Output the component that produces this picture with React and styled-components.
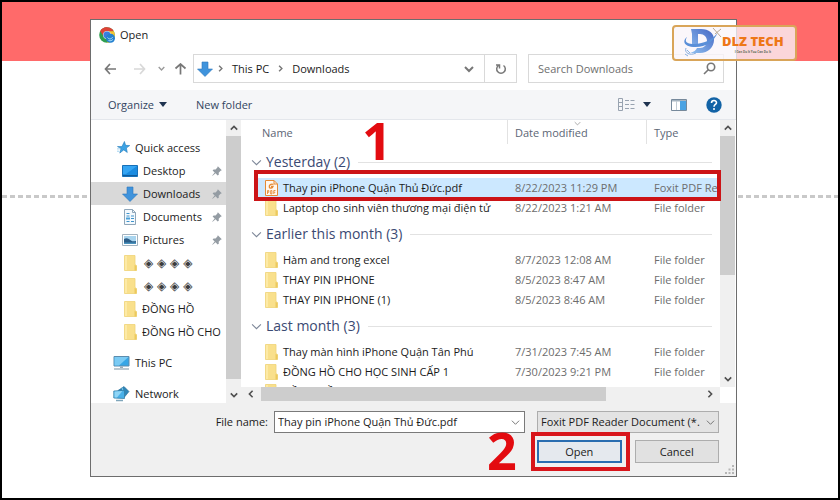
import React from "react";
import styled, { createGlobalStyle } from "styled-components";

const GlobalStyle = createGlobalStyle`
    * {
        box-sizing: border-box;
    }
    body {
        margin: 0;
        background: #ffffff;
        font-family: "Open Sans", "Noto Sans", sans-serif;
        font-size: 11px;
        line-height: 20px;
        color: #1b1b1b;
    }
    button, input, select {
        font: inherit;
        color: inherit;
        margin: 0;
    }
    svg {
        display: block;
        flex: none;
    }
`;

const Page = styled.div`
    position: relative;
    min-height: 100vh;
    padding: 17px 101px 20px 88px;
    border: 2px solid #000000;
    background: linear-gradient(#ff6a6a, #ff6a6a) top / 100% 59px no-repeat;
`;
const DashedLine = styled.div`
    position: absolute;
    left: 0;
    right: 0;
    top: 193px;
    height: 3px;
    background: repeating-linear-gradient(90deg, #c9c9c9 0 5px, #ffffff 5px 8px);
`;
const Dialog = styled.main`
    position: relative;
    border: 1px solid #6d6d6d;
    background: #ffffff;
`;

const TitleBar = styled.header`
    display: flex;
    align-items: center;
    gap: 5px;
    height: 30px;
    padding-left: 8px;
`;
const Title = styled.h1`
    margin: 0;
    font-size: 11px;
    font-weight: 400;
`;

const AddressRow = styled.div`
    display: flex;
    align-items: center;
    padding: 4px 12px 7px 5px;
`;
const NavButton = styled.button`
    display: flex;
    align-items: center;
    justify-content: center;
    width: ${(props) => props.$width}px;
    height: 28px;
    padding: 0;
    border: 0;
    background: transparent;
    color: ${(props) => props.$color || "#777777"};
`;
const AddressBox = styled.div`
    display: flex;
    flex: 1;
    align-items: center;
    height: 29px;
    margin-right: 11px;
    padding-left: 3px;
    border: 1px solid #d9d9d9;
    color: #777777;
`;
const AddressIcon = styled.span`
    margin-right: 4px;
`;
const Crumb = styled.a`
    margin: 0 8px;
    color: #1b1b1b;
    text-decoration: none;
`;
const Spacer = styled.div`
    flex: 1;
`;
const RefreshButton = styled(NavButton)`
    border-left: 1px solid #d9d9d9;
`;
const SearchBox = styled.div`
    display: flex;
    align-items: center;
    width: 196px;
    height: 29px;
    padding: 0 7px 0 9px;
    border: 1px solid #d9d9d9;
`;
const SearchInput = styled.input`
    flex: 1;
    min-width: 0;
    padding: 0;
    border: 0;
    outline: 0;
    background: transparent;
    &::placeholder {
        color: #6f6f6f;
        opacity: 1;
    }
`;

const Toolbar = styled.div`
    display: flex;
    align-items: center;
    height: 30px;
    padding: 0 14px 0 17px;
    border-bottom: 1px solid #e4e7ec;
    background: #f5f6f8;
`;
const ToolButton = styled.button`
    display: flex;
    align-items: center;
    gap: ${(props) => props.$gap || 5}px;
    margin-right: ${(props) => props.$space || 0}px;
    padding: 0;
    border: 0;
    background: transparent;
    color: #33455f;
`;

const Body = styled.div`
    display: flex;
    height: 283px;
`;
const Sidebar = styled.nav`
    width: 135px;
    padding-top: 16px;
    overflow: hidden;
`;
const Place = styled.a`
    display: flex;
    align-items: center;
    gap: 4px;
    height: 23px;
    margin-top: ${(props) => (props.$spaced ? 8 : 0)}px;
    padding: 0 4px 0 ${(props) => props.$indent}px;
    background: ${(props) => (props.$active ? "#d9d9d9" : "transparent")};
    color: #1b1b1b;
    text-decoration: none;
    white-space: nowrap;
`;
const PlaceName = styled.span`
    flex: 1;
    padding-left: 1px;
`;
const Glyphs = styled(PlaceName)`
    padding-left: 3px;
    color: #3c3c3c;
    font-family: "DejaVu Sans", sans-serif;
    font-size: 12px;
`;

const VScroll = styled.div`
    display: flex;
    flex-direction: column;
    width: 15px;
    margin-bottom: ${(props) => props.$corner || 0}px;
    background: #f0f0f0;
`;
const HScroll = styled.div`
    display: flex;
    height: 16px;
    border-bottom: 2px solid #f0f0f0;
    background: #f0f0f0;
`;
const ScrollArrow = styled.button`
    display: flex;
    flex: none;
    align-items: center;
    justify-content: center;
    width: 15px;
    height: 16px;
    padding: 0;
    border: 0;
    background: transparent;
    color: #505050;
`;
const SideArrow = styled(ScrollArrow)`
    width: 20px;
    height: 14px;
`;
const Thumb = styled.div`
    flex: ${(props) => props.$grow};
    background: #cdcdcd;
`;
const Track = styled.div`
    flex: ${(props) => props.$grow};
`;

const FilePane = styled.section`
    position: relative;
    display: flex;
    flex: 1;
    min-width: 0;
    padding-right: 1px;
`;
const ListColumn = styled.div`
    display: flex;
    flex: 1;
    flex-direction: column;
    min-width: 0;
`;
const ListView = styled.div`
    flex: 1;
    min-height: 0;
    overflow: hidden;
`;
const FileTable = styled.table`
    width: 100%;
    border-collapse: collapse;
    border-spacing: 0;
    table-layout: fixed;
`;
const HeadCell = styled.th`
    position: relative;
    width: ${(props) => props.$width || "auto"};
    height: 26px;
    padding: 0 0 1px ${(props) => props.$pad}px;
    background: ${(props) => (props.$line ? "linear-gradient(#e2e2e2, #e2e2e2) left top / 1px 24px no-repeat" : "none")};
    color: #5c6675;
    font-weight: 400;
    text-align: left;
`;
const SortMark = styled.span`
    position: absolute;
    top: 0;
    left: 67px;
    color: #8a8a8a;
`;
const GroupCell = styled.th`
    height: 32px;
    padding: 0 8px 0 10px;
    font-weight: 400;
    text-align: left;
`;
const GroupTitle = styled.div`
    display: flex;
    align-items: center;
    gap: 4px;
    color: #3b4a73;
    font-size: 14px;
    > svg {
        color: #7d8798;
    }
    &::after {
        content: "";
        flex: 1;
        height: 1px;
        margin-left: 4px;
        background: #e2e2e2;
    }
`;
const Cell = styled.td`
    height: 20px;
    padding: 0 0 0 8px;
    overflow: hidden;
    background: ${(props) => (props.$selected ? "#cce8ff" : "transparent")};
    color: #6d6d6d;
    white-space: nowrap;
`;
const NameCell = styled(Cell)`
    padding-left: 16px;
    background: ${(props) => (props.$selected ? "linear-gradient(#cce8ff, #cce8ff) 16px 0 no-repeat" : "transparent")};
    color: #1b1b1b;
`;
const FileName = styled.div`
    display: flex;
    align-items: center;
    gap: 5px;
    padding-left: 8px;
`;

const Footer = styled.footer`
    display: grid;
    grid-template-columns: 177px 1fr 182px;
    row-gap: 7px;
    padding: 8px 17px 13px 0;
    background: #f0f0f0;
`;
const FieldLabel = styled.label`
    line-height: 22px;
    text-align: right;
`;
const FileField = styled.div`
    display: flex;
    align-items: center;
    height: 22px;
    margin: 0 12px 0 6px;
    padding: 0 4px 0 3px;
    border: 1px solid #7a7a7a;
    background: #ffffff;
    color: #6b6b6b;
`;
const FileInput = styled.input`
    flex: 1;
    min-width: 0;
    padding: 0;
    border: 0;
    outline: 0;
    background: transparent;
    color: #1b1b1b;
`;
const TypeField = styled.div`
    display: grid;
    align-items: center;
    height: 22px;
    color: #6b6b6b;
    > * {
        grid-area: 1 / 1;
    }
    > svg {
        justify-self: end;
        margin-right: 4px;
        pointer-events: none;
    }
`;
const TypeSelect = styled.select`
    width: 100%;
    height: 22px;
    padding: 0 14px 0 3px;
    border: 1px solid #adadad;
    border-radius: 0;
    outline: 0;
    appearance: none;
    background: #e3e3e3;
    color: #1b1b1b;
`;
const Actions = styled.div`
    display: flex;
    grid-column: 3;
    gap: 13px;
`;
const ActionSlot = styled.div`
    position: relative;
    flex: 1;
`;
const ActionButton = styled.button`
    width: 100%;
    height: 23px;
    padding: 0;
    border: ${(props) => (props.$primary ? "2px solid #2a6db0" : "1px solid #adadad")};
    background: ${(props) => (props.$primary ? "#e5e9ee" : "#e1e1e1")};
    line-height: 18px;
`;
const Grip = styled.svg`
    position: absolute;
    right: 2px;
    bottom: 2px;
`;

/* red call-outs on top of the dialog */
const FileMark = styled.div`
    position: absolute;
    top: 50px;
    left: 13px;
    right: 15px;
    height: 31px;
    border: 4px solid #cc1417;
`;
const OpenMark = styled.div`
    position: absolute;
    inset: -8px -8px -8px -6px;
    border: 4px solid #d8151b;
    pointer-events: none;
`;
const StepNumber = styled.span`
    position: absolute;
    top: ${(props) => props.$top}px;
    left: ${(props) => props.$left}px;
    color: #e30b10;
    font-size: 52px;
    font-weight: 700;
    line-height: 50px;
`;

const Brand = styled.div`
    position: absolute;
    top: 23px;
    right: 41px;
    display: flex;
    align-items: center;
    width: 125px;
    height: 36px;
    padding-left: 9px;
    border: 2px solid #d9a559;
    border-radius: 4px;
    background: rgb(250 245 250 / 78%);
`;
const BrandText = styled.div`
    display: flex;
    flex-direction: column;
    align-items: center;
    color: #ee7718;
    font-size: 13px;
    font-weight: 800;
    line-height: 18px;
    white-space: nowrap;
`;
const BrandTagline = styled.small`
    color: #5c6a55;
    font-size: 3px;
    font-weight: 700;
    line-height: 4px;
`;

const Chevron = ({ dir = "down", size = 8, weight = 2 }) => {
    const paths = {
        down: "M1 3l4 4 4-4",
        up: "M1 7l4-4 4 4",
        left: "M7 1L3 5l4 4",
        right: "M3 1l4 4-4 4",
    };
    return (
        <svg width={size} height={size} viewBox="0 0 10 10" fill="none" stroke="currentColor" strokeWidth={weight}>
            <path d={paths[dir]} />
        </svg>
    );
};

const Caret = () => (
    <svg width="8" height="5" viewBox="0 0 8 5">
        <path d="M0 0h8L4 5z" fill="#1f3350" />
    </svg>
);

const Arrow = ({ turn = 0 }) => (
    <svg width="13" height="12" viewBox="0 0 13 12" fill="none" stroke="currentColor" strokeWidth="1.700">
        <path d="M12 6H2M6 1L1.500 6L6 11" transform={`rotate(${turn} 6.500 6)`} />
    </svg>
);

const ChromeIcon = () => (
    <svg width="16" height="16" viewBox="0 0 16 16">
        <circle cx="8" cy="8" r="7.800" fill="#2f9e4f" />
        <path d="M1.200 4.200A7.800 7.800 0 0 1 14.800 4.200L8 5z" fill="#dd4337" />
        <path d="M1.200 4.200A7.800 7.800 0 0 1 8 .2L8 5 4.800 9.500z" fill="#dd4337" />
        <path d="M8 4.200h6.800A7.800 7.800 0 0 1 8 15.800L11.500 9z" fill="#f6c431" />
        <circle cx="8" cy="8" r="3.900" fill="#cfe3f7" />
        <circle cx="8" cy="8" r="3.400" fill="#3b7de0" />
        <circle cx="11.500" cy="11.300" r="4.500" fill="#2480d0" />
        <path d="M8.500 10.500c1.500 2 4 1.800 5.200-.5M9.500 13.500c2 .8 3.500 0 4.500-1.200" fill="none" stroke="#a9dcf5" strokeWidth="1" />
    </svg>
);

const DownIcon = () => (
    <svg width="16" height="16" viewBox="0 0 16 16">
        <path d="M5 1h6v7h4.500L8 15.500.5 8H5z" fill="#3f93dc" stroke="#2b76bd" strokeWidth=".6" />
    </svg>
);

const FolderIcon = () => (
    <svg width="13" height="16" viewBox="0 0 13 16">
        <path d="M.5.500h10.500v9l1.500 1v5H.5z" fill="#f9e08c" stroke="#efd377" strokeWidth=".8" />
        <path d="M1 1h2v14H1z" fill="#fdeaa6" />
        <path d="M10.500 10l2 .8v4.700h-2z" fill="#ecc95e" />
    </svg>
);

const PdfIcon = () => (
    <svg width="13" height="16" viewBox="0 0 13 16" fill="none" stroke="#e58a35">
        <path d="M.5.500h8.500l3.500 3.500v11.500H.5z" fill="#fff8ef" />
        <path d="M9 .5v3.500h3.500" />
        <path d="M8.500 4.500C6 3.500 4 5 4.300 7c.3 1.500 3 1.500 3.700-.5H6" strokeWidth="1.300" />
        <path d="M2.500 14v-3.500h1.300v1.800H2.500M5.700 10.500V14h1.200v-3.500zM8.800 14v-3.500h1.700M8.800 12.300h1.500" strokeWidth=".9" />
    </svg>
);

const StarIcon = () => (
    <svg width="13" height="13" viewBox="0 0 14 14">
        <path d="M8 .5l1.300 4.200 4.400.2-3.600 2.700 1 4.800-3.800-2.800L3 13l1.300-4.800L.5 6h4.800z" fill="#3da3e4" stroke="#1d78b9" strokeWidth=".6" />
        <path d="M0 8.500h3M0 11h2.500" stroke="#7fc3ec" strokeWidth=".8" />
    </svg>
);

const DesktopIcon = () => (
    <svg width="16" height="16" viewBox="0 0 16 16">
        <path d="M.5 2.500h15v11H.5z" fill="#1a8be0" stroke="#1770b8" />
        <path d="M1 3h14L4 11H1z" fill="#35a5f3" />
        <path d="M1 12.500h14" stroke="#0f5c9c" />
    </svg>
);

const DocumentIcon = () => (
    <svg width="16" height="16" viewBox="0 0 16 16" fill="none">
        <path d="M2.500.500h8l3 3v12h-11z" fill="#f4f9fd" stroke="#8fa6b9" />
        <path d="M10.500.5v3h3" stroke="#8fa6b9" />
        <path d="M4.500 4.500h3M4.500 7h3M9 7h3M4.500 12.500h3M9 9.500h3M9 12.500h3" stroke="#3f94cc" strokeWidth="1.200" />
        <path d="M4 8.500h4v2H4z" fill="#4aa0d8" />
    </svg>
);

const PictureIcon = () => (
    <svg width="16" height="16" viewBox="0 0 16 16">
        <path d="M.5 2.500h15v11H.5z" fill="#ffffff" stroke="#a3b3bf" />
        <path d="M2 4h12v8H2z" fill="#a9d5ef" />
        <path d="M2 7c3-2 5 0 7 1.500s3 .5 5 .5v3H2z" fill="#2b5d88" />
        <path d="M2 10.500h12V12H2z" fill="#4b93bd" />
    </svg>
);

const PcIcon = () => (
    <svg width="17" height="16" viewBox="0 0 17 16">
        <path d="M1 1.500h15v9.500H1z" fill="#37a6e6" stroke="#5c8cad" />
        <path d="M1.500 2h14L6 10.500H1.500z" fill="#7bcbf4" />
        <path d="M7 11.500h3v1.500H7z" fill="#9aaab5" />
        <path d="M1 14h15" stroke="#8ea3b0" strokeWidth="1.200" />
    </svg>
);

const NetworkIcon = () => (
    <svg width="17" height="16" viewBox="0 0 17 16">
        <path d="M5 4.500l6-4 5 5-4.500 5.500z" fill="#2f86b8" stroke="#246a94" strokeWidth=".6" />
        <path d="M9 1.500l2.500 8" stroke="#8ad1f2" strokeWidth=".9" />
        <path d="M.8 5l10.700-.5v8L.8 12z" fill="#49b0e8" stroke="#347da6" strokeWidth=".8" />
        <path d="M1.500 5.500l8-.4L4 11.500H1.500z" fill="#8fd5f6" />
        <path d="M3 14.500h7" stroke="#7fa6bb" strokeWidth="1.500" />
    </svg>
);

const PinIcon = () => (
    <svg width="10" height="10" viewBox="0 0 10 10" fill="#949ca3">
        <path d="M5.800.3l4 4-1.200.5-1.900 1.900.1 2L5.600 9.500 3.600 7.300.6 9.800.2 9.400l2.500-3L.6 4.400l1-1 2 .1 1.800-2z" />
    </svg>
);

const BrandIcon = () => (
    <svg width="39" height="32" viewBox="0 0 39 32" fill="none">
        <defs>
            <linearGradient id="brandBlue" x1="0" y1="1" x2="1" y2="0">
                <stop offset="0" stopColor="#8fc0f0" />
                <stop offset="1" stopColor="#4566c4" />
            </linearGradient>
        </defs>
        <path
            d="M8 2h10c8 0 13 4 13 11s-6 13-14 13H7c4-1 6-3 7-5h3c4 0 7-3 7-7s-3-7-7-7h-2v12H9V7z"
            fill="url(#brandBlue)"
        />
        <path d="M4 10C-1 14 1 19 10 20c12 1 21-5 25-15-4 7-14 12-24 12C4 17 1 15 4 10z" fill="#5a8fd8" />
        <path d="M3 21c-2 5 4 8 10 5M4 23l3 3M5 29l-3-2" stroke="#86aee0" strokeWidth="1" />
        <path d="M30 1l8 9M38 2l-6 5" stroke="#b9a890" strokeWidth="1" />
    </svg>
);

const places = [
    { name: "Quick access", icon: <StarIcon />, indent: 26 },
    { name: "Desktop", icon: <DesktopIcon />, indent: 31, pin: true },
    { name: "Downloads", icon: <DownIcon />, indent: 31, pin: true, active: true },
    { name: "Documents", icon: <DocumentIcon />, indent: 31, pin: true },
    { name: "Pictures", icon: <PictureIcon />, indent: 31, pin: true },
    { name: "◈ ◈ ◈ ◈", icon: <FolderIcon />, indent: 33, glyphs: true },
    { name: "◈ ◈ ◈ ◈", icon: <FolderIcon />, indent: 33, glyphs: true },
    { name: "ĐỒNG HỒ", icon: <FolderIcon />, indent: 33 },
    { name: "ĐỒNG HỒ CHO", icon: <FolderIcon />, indent: 33 },
    { name: "This PC", icon: <PcIcon />, indent: 22, spaced: true },
    { name: "Network", icon: <NetworkIcon />, indent: 22, spaced: true },
];

const groups = [
    {
        title: "Yesterday (2)",
        files: [
            { name: "Thay pin iPhone Quận Thủ Đức.pdf", date: "8/22/2023 11:29 PM", type: "Foxit PDF Reader", selected: true },
            { name: "Laptop cho sinh viên thương mại điện tử", date: "8/22/2023 1:21 AM", type: "File folder" },
        ],
    },
    {
        title: "Earlier this month (3)",
        files: [
            { name: "Hàm and trong excel", date: "8/7/2023 12:08 AM", type: "File folder" },
            { name: "THAY PIN IPHONE", date: "8/5/2023 8:47 AM", type: "File folder" },
            { name: "THAY PIN IPHONE (1)", date: "8/5/2023 8:46 AM", type: "File folder" },
        ],
    },
    {
        title: "Last month (3)",
        files: [
            { name: "Thay màn hình iPhone Quận Tân Phú", date: "7/31/2023 7:45 AM", type: "File folder" },
            { name: "ĐỒNG HỒ CHO HỌC SINH CẤP 1", date: "7/30/2023 9:21 PM", type: "File folder" },
            { name: "ĐỒNG HỒ", date: "", type: "" },
        ],
    },
];

const FileRow = ({ file }) => (
    <tr>
        <NameCell $selected={file.selected}>
            <FileName>
                {file.selected ? <PdfIcon /> : <FolderIcon />}
                {file.name}
            </FileName>
        </NameCell>
        <Cell $selected={file.selected}>{file.date}</Cell>
        <Cell $selected={file.selected}>{file.type}</Cell>
    </tr>
);

const App = () => {
    return (
        <>
            <GlobalStyle />
            <Page>
                <DashedLine />
                <Dialog>
                    <TitleBar>
                        <ChromeIcon />
                        <Title>Open</Title>
                    </TitleBar>

                    <AddressRow>
                        <NavButton $width={28} aria-label="Back"><Arrow /></NavButton>
                        <NavButton $width={30} $color="#d8d8d8" aria-label="Forward"><Arrow turn={180} /></NavButton>
                        <NavButton $width={14} $color="#9a9a9a" aria-label="Recent"><Chevron size={7} /></NavButton>
                        <NavButton $width={25} aria-label="Up"><Arrow turn={90} /></NavButton>
                        <AddressBox>
                            <AddressIcon><DownIcon /></AddressIcon>
                            <Chevron dir="right" size={7} />
                            <Crumb href="#pc">This PC</Crumb>
                            <Chevron dir="right" size={7} />
                            <Crumb href="#downloads">Downloads</Crumb>
                            <Spacer />
                            <NavButton $width={30} aria-label="Previous locations"><Chevron size={10} /></NavButton>
                            <RefreshButton $width={32} aria-label="Refresh">
                                <svg width="12" height="12" viewBox="0 0 12 12" fill="none" stroke="currentColor" strokeWidth="1.500">
                                    <path d="M8.500 2.500A4.300 4.300 0 1 1 3.500 2.500M1 2h3.500v3.500" />
                                </svg>
                            </RefreshButton>
                        </AddressBox>
                        <SearchBox>
                            <SearchInput type="search" placeholder="Search Downloads" aria-label="Search Downloads" />
                            <svg width="13" height="13" viewBox="0 0 13 13" fill="none" stroke="#777777" strokeWidth="1.600">
                                <circle cx="8" cy="5" r="3.700" />
                                <path d="M5.500 7.500L1 12" />
                            </svg>
                        </SearchBox>
                    </AddressRow>

                    <Toolbar>
                        <ToolButton $space={29}>Organize <Caret /></ToolButton>
                        <ToolButton>New folder</ToolButton>
                        <Spacer />
                        <ToolButton $space={20} $gap={8} aria-label="Change your view">
                            <svg width="17" height="13" viewBox="0 0 17 13" fill="none" stroke="#98a3b0">
                                <path d="M.5.500h4v12h-4zM.5 4.500h4M.5 8.500h4" />
                                <path d="M7 2.500h4M12.500 2.500h4M7 6.500h4M12.500 6.500h4M7 10.500h4M12.500 10.500h4" />
                            </svg>
                            <Caret />
                        </ToolButton>
                        <ToolButton $space={19} aria-label="Preview pane">
                            <svg width="16" height="12" viewBox="0 0 16 12">
                                <path d="M.5.500h15v11H.5z" fill="#ffffff" stroke="#76899b" />
                                <path d="M1 1h14v1.500H1z" fill="#a6b4c0" />
                                <path d="M9 2h6v9H9z" fill="#4ba3e3" />
                                <path d="M5.500 2v9" stroke="#c2ccd4" />
                            </svg>
                        </ToolButton>
                        <ToolButton aria-label="Help">
                            <svg width="16" height="16" viewBox="0 0 16 16" fill="none">
                                <circle cx="8" cy="8" r="7.700" fill="#1263a6" />
                                <path d="M5.500 6c0-3.200 5-3.200 5-.3C10.500 7.500 8 7.500 8 9.800" stroke="#ffffff" strokeWidth="1.600" />
                                <circle cx="8" cy="12" r="1" fill="#ffffff" />
                            </svg>
                        </ToolButton>
                    </Toolbar>

                    <Body>
                        <Sidebar>
                            {places.map((place, i) => (
                                <Place key={i} href="#place" $indent={place.indent} $active={place.active} $spaced={place.spaced}>
                                    {place.icon}
                                    {place.glyphs ? <Glyphs>{place.name}</Glyphs> : <PlaceName>{place.name}</PlaceName>}
                                    {place.pin && <PinIcon />}
                                </Place>
                            ))}
                        </Sidebar>
                        <VScroll>
                            <ScrollArrow aria-label="Scroll up"><Chevron dir="up" /></ScrollArrow>
                            <Thumb $grow={243} />
                            <Track $grow={8} />
                            <ScrollArrow aria-label="Scroll down"><Chevron /></ScrollArrow>
                        </VScroll>

                        <FilePane>
                            <ListColumn>
                                <ListView>
                                    <FileTable>
                                        <thead>
                                            <tr>
                                                <HeadCell $pad={21}>Name</HeadCell>
                                                <HeadCell $pad={8} $width="139px" $line>
                                                    Date modified
                                                    <SortMark><Chevron size={7} weight={1} /></SortMark>
                                                </HeadCell>
                                                <HeadCell $pad={8} $width="74px" $line>Type</HeadCell>
                                            </tr>
                                        </thead>
                                        {groups.map((group) => (
                                            <tbody key={group.title}>
                                                <tr>
                                                    <GroupCell colSpan={3}>
                                                        <GroupTitle><Chevron size={11} weight={1} />{group.title}</GroupTitle>
                                                    </GroupCell>
                                                </tr>
                                                {group.files.map((file) => (
                                                    <FileRow key={file.name} file={file} />
                                                ))}
                                            </tbody>
                                        ))}
                                    </FileTable>
                                </ListView>
                                <HScroll>
                                    <SideArrow aria-label="Scroll left"><Chevron dir="left" /></SideArrow>
                                    <Thumb $grow={345} />
                                    <Track $grow={94} />
                                    <SideArrow aria-label="Scroll right"><Chevron dir="right" /></SideArrow>
                                </HScroll>
                            </ListColumn>
                            <VScroll $corner={16}>
                                <ScrollArrow aria-label="Scroll up"><Chevron dir="up" /></ScrollArrow>
                                <Thumb $grow={139} />
                                <Track $grow={96} />
                                <ScrollArrow aria-label="Scroll down"><Chevron /></ScrollArrow>
                            </VScroll>
                            <FileMark />
                            <StepNumber $top={-5} $left={121}>1</StepNumber>
                        </FilePane>
                    </Body>

                    <Footer>
                        <FieldLabel htmlFor="file-name">File name:</FieldLabel>
                        <FileField>
                            <FileInput id="file-name" type="text" defaultValue="Thay pin iPhone Quận Thủ Đức.pdf" />
                            <Chevron size={9} weight={1} />
                        </FileField>
                        <TypeField>
                            <TypeSelect aria-label="File type">
                                <option>Foxit PDF Reader Document (*.</option>
                            </TypeSelect>
                            <Chevron size={9} weight={1} />
                        </TypeField>
                        <Actions>
                            <ActionSlot>
                                <ActionButton $primary>Open</ActionButton>
                                <OpenMark />
                                <StepNumber $top={-15} $left={-50}>2</StepNumber>
                            </ActionSlot>
                            <ActionSlot>
                                <ActionButton>Cancel</ActionButton>
                            </ActionSlot>
                        </Actions>
                    </Footer>
                    <Grip width="9" height="9" viewBox="0 0 9 9" fill="#b5b5b5">
                        <path d="M7 0h2v2H7zM7 3.500h2v2H7zM7 7h2v2H7zM3.500 3.500h2v2h-2zM3.500 7h2v2h-2zM0 7h2v2H0z" />
                    </Grip>
                </Dialog>

                <Brand>
                    <BrandIcon />
                    <BrandText>
                        DLZ TECH
                        <BrandTagline>I Can Do It You Can Do It</BrandTagline>
                    </BrandText>
                </Brand>
            </Page>
        </>
    );
};

export default App;
